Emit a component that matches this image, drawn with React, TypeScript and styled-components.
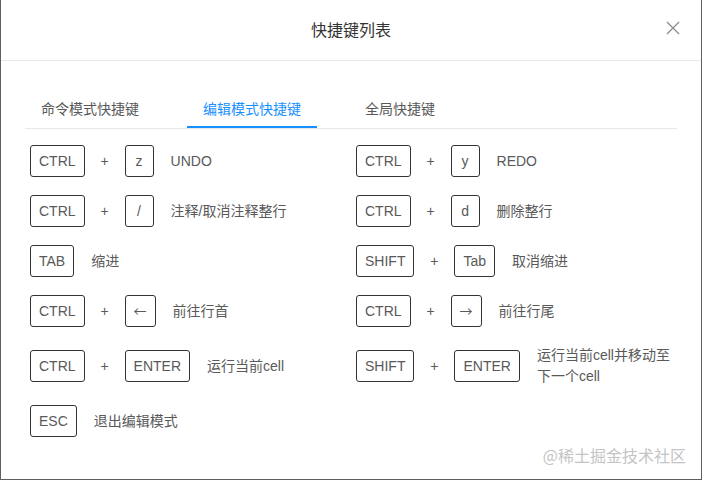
import React, { FC } from 'react';
import styled, { createGlobalStyle } from 'styled-components';

const GlobalStyle = createGlobalStyle`
  html, body {
    margin: 0;
    padding: 0;
    background: #ffffff;
  }
  body {
    font-family: 'Liberation Sans', 'Noto Sans CJK SC', sans-serif;
    font-size: 14px;
  }
`;

interface Shortcut {
  keys: string[];
  desc: string;
}

const rows: [Shortcut, Shortcut | null][] = [
  [
    { keys: ['CTRL', 'z'], desc: 'UNDO' },
    { keys: ['CTRL', 'y'], desc: 'REDO' },
  ],
  [
    { keys: ['CTRL', '/'], desc: '注释/取消注释整行' },
    { keys: ['CTRL', 'd'], desc: '删除整行' },
  ],
  [
    { keys: ['TAB'], desc: '缩进' },
    { keys: ['SHIFT', 'Tab'], desc: '取消缩进' },
  ],
  [
    { keys: ['CTRL', '←'], desc: '前往行首' },
    { keys: ['CTRL', '→'], desc: '前往行尾' },
  ],
  [
    { keys: ['CTRL', 'ENTER'], desc: '运行当前cell' },
    { keys: ['SHIFT', 'ENTER'], desc: '运行当前cell并移动至下一个cell' },
  ],
  [{ keys: ['ESC'], desc: '退出编辑模式' }, null],
];

const tabs = ['命令模式快捷键', '编辑模式快捷键', '全局快捷键'];

const isArrow = (k: string) => k === '←' || k === '→';

const ShortcutItem: FC<{ item: Shortcut }> = ({ item }) => (
  <Item>
    {item.keys.map((k, i) => (
      <React.Fragment key={k + i}>
        {i > 0 && <Plus>+</Plus>}
        <Key $arrow={isArrow(k)}>{k}</Key>
      </React.Fragment>
    ))}
    <Desc>{item.desc}</Desc>
  </Item>
);

const App: FC = () => {
  return (
    <>
      <GlobalStyle />
      <Modal>
        <Header>
          <Title>快捷键列表</Title>
          <CloseButton>
            <svg width="14" height="14" viewBox="0 0 14 14">
              <path d="M1 1 L13 13 M13 1 L1 13" stroke="#8c8c8c" strokeWidth="1.3" fill="none" />
            </svg>
          </CloseButton>
        </Header>
        <Body>
          <TabBar>
            {tabs.map((t, i) => (
              <Tab key={t} $active={i === 1}>
                {t}
              </Tab>
            ))}
          </TabBar>
          <Grid>
            {rows.map(([l, r], i) => (
              <React.Fragment key={i}>
                <ShortcutItem item={l} />
                {r ? <ShortcutItem item={r} /> : <Item />}
              </React.Fragment>
            ))}
          </Grid>
        </Body>
        <Watermark>@稀土掘金技术社区</Watermark>
      </Modal>
    </>
  );
};

export default App;

const Modal = styled.div`
  position: relative;
  box-sizing: border-box;
  width: 702px;
  height: 480px;
  background: #fff;
  border-left: 1px solid #5f5f5f;
  border-right: 1px solid #5f5f5f;
  border-bottom: 1px solid #5f5f5f;
  overflow: hidden;
`;

const Header = styled.div`
  position: relative;
  height: 60px;
  border-bottom: 1px solid #e8e8e8;
  display: flex;
  align-items: center;
  justify-content: center;
`;

const Title = styled.div`
  font-size: 16px;
  color: #333;
  line-height: 22px;
  padding-top: 2px;
`;

const CloseButton = styled.div`
  position: absolute;
  right: 21px;
  top: 21px;
  width: 14px;
  height: 14px;
  display: flex;
  cursor: pointer;
`;

const Body = styled.div`
  padding: 21px 24px 0;
`;

const TabBar = styled.div`
  display: flex;
  border-bottom: 1px solid #e8e8e8;
`;

const Tab = styled.div<{ $active?: boolean }>`
  position: relative;
  padding: 16px 16px 8px;
  margin-right: 32px;
  line-height: 22px;
  color: ${(p) => (p.$active ? '#1890ff' : '#595959')};
  cursor: pointer;
  &::after {
    content: '';
    position: absolute;
    left: 0;
    right: 0;
    bottom: 0;
    height: 2px;
    background: ${(p) => (p.$active ? '#1890ff' : 'transparent')};
  }
`;

const Grid = styled.div`
  display: grid;
  grid-template-columns: 1fr 1fr;
  row-gap: 18px;
  padding-top: 16px;
`;

const Item = styled.div`
  display: flex;
  align-items: center;
  padding-left: 5px;
  min-width: 0;
`;

const Key = styled.span<{ $arrow?: boolean }>`
  box-sizing: border-box;
  height: 32px;
  min-width: 29px;
  padding: 0 8px;
  line-height: 30px;
  text-align: center;
  border: 1px solid #333;
  border-radius: 3px;
  color: #595959;
  flex-shrink: 0;
  font-family: ${(p) =>
    p.$arrow ? "'Noto Sans CJK SC', sans-serif" : "'Liberation Sans', sans-serif"};
  font-size: ${(p) => (p.$arrow ? '13px' : '14px')};
`;

const Plus = styled.span`
  width: 40px;
  text-align: center;
  color: #595959;
  flex-shrink: 0;
`;

const Desc = styled.span`
  margin-left: 17px;
  color: #595959;
  line-height: 21px;
  flex: 1;
  min-width: 0;
`;

const Watermark = styled.div`
  position: absolute;
  right: 15px;
  bottom: 13px;
  font-family: 'Noto Sans CJK SC', sans-serif;
  font-size: 16px;
  color: #c4c4c4;
  line-height: 22px;
`;
